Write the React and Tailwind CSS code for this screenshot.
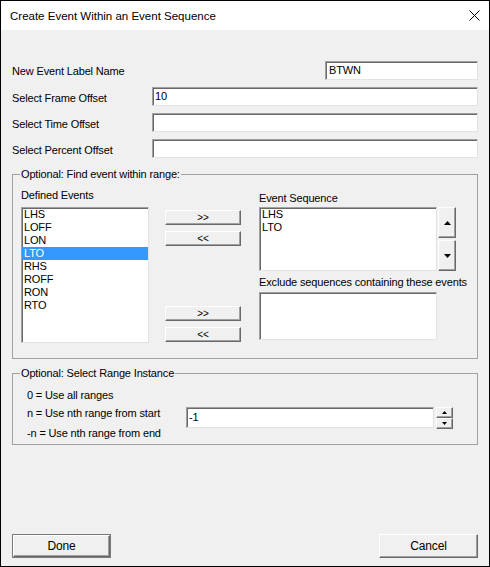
import React from "react";

const sunken =
  "bg-white border border-t-[#a0a0a0] border-l-[#a0a0a0] border-r-[#e3e3e3] border-b-[#e3e3e3] shadow-[inset_1px_1px_0_#696969]";
const raised =
  "bg-[#f0f0f0] border border-t-white border-l-white border-r-[#696969] border-b-[#696969] shadow-[inset_-1px_-1px_0_#a0a0a0]";

function TriUp() {
  return (
    <svg width="7" height="4" viewBox="0 0 7 4">
      <path d="M3.5 0 L7 4 L0 4 Z" fill="black" />
    </svg>
  );
}
function TriDown() {
  return (
    <svg width="7" height="4" viewBox="0 0 7 4">
      <path d="M0 0 L7 0 L3.5 4 Z" fill="black" />
    </svg>
  );
}
function TinyUp() {
  return (
    <svg width="5" height="3" viewBox="0 0 5 3">
      <path d="M2.5 0 L5 3 L0 3 Z" fill="black" />
    </svg>
  );
}
function TinyDown() {
  return (
    <svg width="5" height="3" viewBox="0 0 5 3">
      <path d="M0 0 L5 0 L2.5 3 Z" fill="black" />
    </svg>
  );
}

function Row({ label, value }) {
  return (
    <div className="flex h-[19px] items-center">
      <div className="w-[140px] pt-[3px]">{label}</div>
      <div className={`flex-1 h-[19px] flex items-center pl-[2px] ${sunken}`}>{value}</div>
    </div>
  );
}

function Btn({ children, className = "" }) {
  return (
    <div className={`flex items-center justify-center ${raised} ${className}`}>{children}</div>
  );
}

function Group({ title, className = "", children }) {
  return (
    <div className={`relative border border-[#a0a0a0] ${className}`}>
      <div className="absolute left-[7px] -top-[7px] px-[1px] bg-[#f0f0f0] leading-[13px]">{title}</div>
      {children}
    </div>
  );
}

export default function App() {
  const defined = ["LHS", "LOFF", "LON", "LTO", "RHS", "ROFF", "RON", "RTO"];
  return (
    <div className="w-[490px] h-[567px] flex flex-col border border-black bg-[#f0f0f0] text-black text-[11px] leading-[13px] tracking-[-0.15px] font-['Liberation_Sans',Arial,sans-serif]">
      {/* Title bar */}
      <div className="h-[29px] bg-white flex items-center justify-between pl-[9px] pr-[9px]">
        <div className="text-[11.5px] leading-[16px] tracking-normal">Create Event Within an Event Sequence</div>
        <svg width="11" height="11" viewBox="0 0 11 11">
          <path d="M0.5 0.5 L10.5 10.5 M10.5 0.5 L0.5 10.5" stroke="black" strokeWidth="1" />
        </svg>
      </div>

      {/* Body */}
      <div className="flex-1 flex flex-col px-[11px] pt-[31px]">
        <div className="flex h-[19px] items-center">
          <div className="flex-1 pt-[1px]">New Event Label Name</div>
          <div className={`w-[153px] h-[19px] flex items-center pl-[3px] ${sunken}`}>BTWN</div>
        </div>
        <div className="mt-[7px]">
          <Row label="Select Frame Offset" value="10" />
        </div>
        <div className="mt-[7px]">
          <Row label="Select Time Offset" value="" />
        </div>
        <div className="mt-[7px]">
          <Row label="Select Percent Offset" value="" />
        </div>

        {/* Group 1 */}
        <Group title="Optional: Find event within range:" className="mt-[16px] h-[185px]">
          <div className="flex pl-[8px]">
            <div className="w-[128px] pt-[14px] flex flex-col">
              <div className="h-[13px]">Defined Events</div>
              <div className={`mt-[5px] h-[136px] py-0 ${sunken}`}>
                {defined.map((d) => (
                  <div
                    key={d}
                    className={`h-[13px] pl-[2px] ${d === "LTO" ? "bg-[#3399ff] text-white" : ""}`}
                  >
                    {d}
                  </div>
                ))}
              </div>
            </div>

            <div className="ml-[16px] w-[76px] pt-[35px] flex flex-col">
              <Btn className="h-[15px] text-[10px]">&gt;&gt;</Btn>
              <Btn className="mt-[6px] h-[15px] text-[10px]">&lt;&lt;</Btn>
              <Btn className="mt-[60px] h-[15px] text-[10px]">&gt;&gt;</Btn>
              <Btn className="mt-[6px] h-[15px] text-[10px]">&lt;&lt;</Btn>
            </div>

            <div className="ml-[18px] pt-[17px] flex flex-col">
              <div className="h-[13px]">Event Sequence</div>
              <div className="mt-[2px] flex">
                <div className={`w-[178px] h-[64px] pl-[2px] ${sunken}`}>
                  <div className="h-[13px]">LHS</div>
                  <div className="h-[13px]">LTO</div>
                </div>
                <div className="ml-[1px] w-[18px] flex flex-col">
                  <Btn className="h-[31px]">
                    <TriUp />
                  </Btn>
                  <Btn className="mt-[2px] h-[31px]">
                    <TriDown />
                  </Btn>
                </div>
              </div>
              <div className="mt-[5px] h-[13px] whitespace-nowrap">Exclude sequences containing these events</div>
              <div className={`mt-[3px] w-[178px] h-[48px] ${sunken}`}></div>
            </div>
          </div>
        </Group>

        {/* Group 2 */}
        <Group title="Optional: Select Range Instance" className="mt-[14px] h-[72px]">
          <div className="flex pl-[14px]">
            <div className="w-[159px] pt-[15px] flex flex-col">
              <div className="h-[13px]">0 = Use all ranges</div>
              <div className="mt-[5px] h-[13px]">n = Use nth range from start</div>
              <div className="mt-[7px] h-[13px]">-n = Use nth range from end</div>
            </div>
            <div className="pt-[33px] flex">
              <div className={`w-[248px] h-[21px] flex items-center pl-[2px] ${sunken}`}>-1</div>
              <div className="ml-[2px] w-[17px] flex flex-col">
                <Btn className="h-[11px]">
                  <TinyUp />
                </Btn>
                <Btn className="h-[11px]">
                  <TinyDown />
                </Btn>
              </div>
            </div>
          </div>
        </Group>

        {/* Bottom buttons */}
        <div className="mt-auto pb-[8px] flex justify-between">
          <div className="w-[99px] h-[24px] border border-[#7a7a7a] flex">
            <Btn className="flex-1 text-[12px]">Done</Btn>
          </div>
          <Btn className="w-[99px] h-[24px] text-[12px]">Cancel</Btn>
        </div>
      </div>
    </div>
  );
}
